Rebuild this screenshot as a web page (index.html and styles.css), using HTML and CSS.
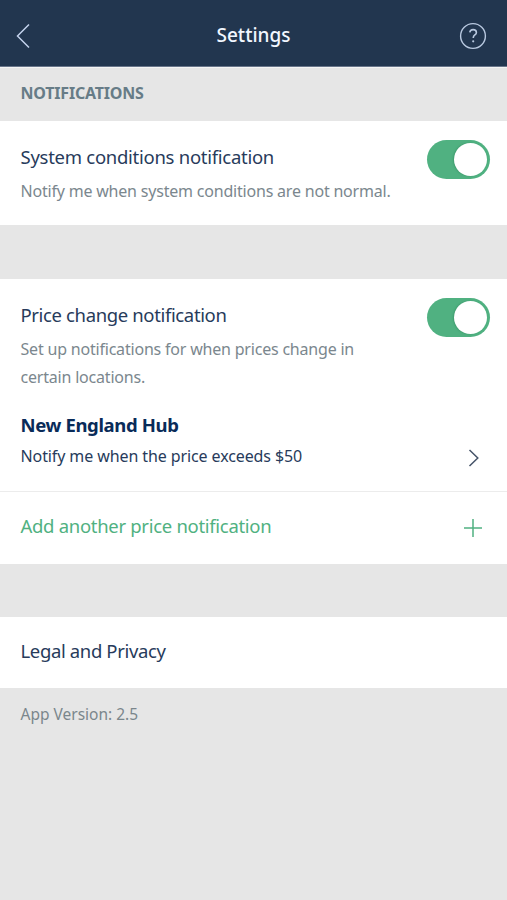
FILE: index.html
```html
<!DOCTYPE html>
<html lang="en">
<head>
<meta charset="utf-8">
<title>Settings</title>
<link rel="stylesheet" href="styles.css">
</head>
<body>
<header class="bar">
  <svg class="back" width="16" height="26" viewBox="0 0 16 26"><path d="M14 1.5 2.5 13 14 24.5"/></svg>
  <h1 class="bar-title">Settings</h1>
  <svg class="help" width="28" height="28" viewBox="0 0 28 28"><circle cx="14" cy="14" r="12.4"/><path class="mark" d="M10.8 10.4c.2-1.8 1.4-2.8 3.3-2.8 2 0 3.3 1.1 3.3 2.8 0 2.6-3.1 2.5-3.1 5.1v.6"/><circle class="dot" cx="14.2" cy="19.3" r="1.1"/></svg>
</header>
<h2 class="section">NOTIFICATIONS</h2>
<section class="card system">
  <div class="setting">
    <h3 class="label l-system">System conditions notification</h3>
    <p class="hint">Notify me when system conditions are not normal.</p>
  </div>
  <span class="toggle"><span class="knob"></span></span>
</section>
<section class="price">
  <div class="card intro">
    <div class="setting">
      <h3 class="label">Price change notification</h3>
      <p class="hint">Set up notifications for when prices change in<br>certain locations.</p>
    </div>
    <span class="toggle"><span class="knob"></span></span>
  </div>
  <div class="card hub">
    <div class="setting">
      <h3 class="hub-name">New England Hub</h3>
      <p class="hub-rule">Notify me when the price exceeds $50</p>
    </div>
    <svg class="chevron" width="12" height="20" viewBox="0 0 12 20"><path d="M1.5 2 9.8 10 1.5 18"/></svg>
  </div>
  <div class="card add">
    <span class="label l-add">Add another price notification</span>
    <svg class="plus" width="20" height="20" viewBox="0 0 20 20"><path d="M1 10h18M10 1v18"/></svg>
  </div>
</section>
<section class="card legal"><span class="label">Legal and Privacy</span></section>
<footer class="version">App Version: 2.5</footer>
</body>
</html>
```
FILE: styles.css
```css
* { box-sizing: border-box; }
body {
  margin: 0;
  min-height: 900px;
  background: #e6e6e6;
  color: #273b5b;
  font-family: "Noto Sans", "Open Sans", sans-serif;
}
h1, h2, h3, p { margin: 0; font-weight: 400; }
svg { display: block; fill: none; flex: none; }
.bar {
  display: grid;
  grid-template-columns: 80px 1fr 80px;
  align-items: start;
  height: 68px;
  background: #22364f;
  border-bottom: 1px solid #f4f4f4;
  box-shadow: inset 0 -1px #68758a;
}
.back { margin: 23px 0 0 15px; stroke: #c3d2ec; stroke-width: 1.5; }
.bar-title {
  padding-top: 20px;
  text-align: center;
  font-size: 19px;
  font-weight: 500;
  line-height: 30px;
  color: #f2f7ff;
}
.help { justify-self: end; margin: 22px 20px 0 0; stroke: #b9c9e0; stroke-width: 1.4; }
.mark { stroke-width: 1.6; }
.dot { fill: #b9c9e0; stroke: none; }
.section {
  height: 53px;
  padding: 11px 20.5px 0;
  font-size: 16px;
  font-weight: 700;
  line-height: 28px;
  letter-spacing: -0.2px;
  color: #677c87;
}
.card {
  display: flex;
  justify-content: space-between;
  padding: 0 17px 0 20.5px;
  background: #fff;
}
.setting { white-space: nowrap; }
.label { font-size: 18.5px; line-height: 28px; letter-spacing: -0.36px; white-space: nowrap; }
.l-system { letter-spacing: -0.27px; }
.l-add { letter-spacing: -0.3px; }
.hint { padding-top: 6px; font-size: 16px; line-height: 28px; letter-spacing: -0.2px; color: #7b878e; }
.system { height: 104px; padding-top: 22px; }
.toggle {
  flex: none;
  width: 63px;
  height: 39px;
  margin-top: -3px;
  padding: 3px;
  border-radius: 20px;
  background: #50b181;
}
.knob {
  display: block;
  width: 33px;
  height: 33px;
  margin-left: 24px;
  border-radius: 50%;
  background: #fff;
  box-shadow: -1px 0 2px #3f9b6e;
}
.price { margin-top: 54px; }
.intro { height: 131px; padding-top: 22px; }
.hub { height: 81px; padding-right: 27px; }
.hub-name { font-size: 18.5px; font-weight: 700; line-height: 30px; letter-spacing: -0.36px; color: #092b59; }
.hub-rule { font-size: 16px; line-height: 32px; letter-spacing: -0.1px; }
.chevron { margin-top: 38px; stroke: #465469; stroke-width: 1.5; }
.add {
  height: 73px;
  padding: 20px 24px 0 20.5px;
  border-top: 1px solid #ececec;
  color: #50b181;
}
.plus { margin-top: 6px; stroke: #50b181; stroke-width: 1.5; }
.legal { height: 71px; margin-top: 53px; padding-top: 20px; }
.version { padding: 12px 20.5px; font-size: 15.5px; line-height: 28px; color: #7b868c; }
```
